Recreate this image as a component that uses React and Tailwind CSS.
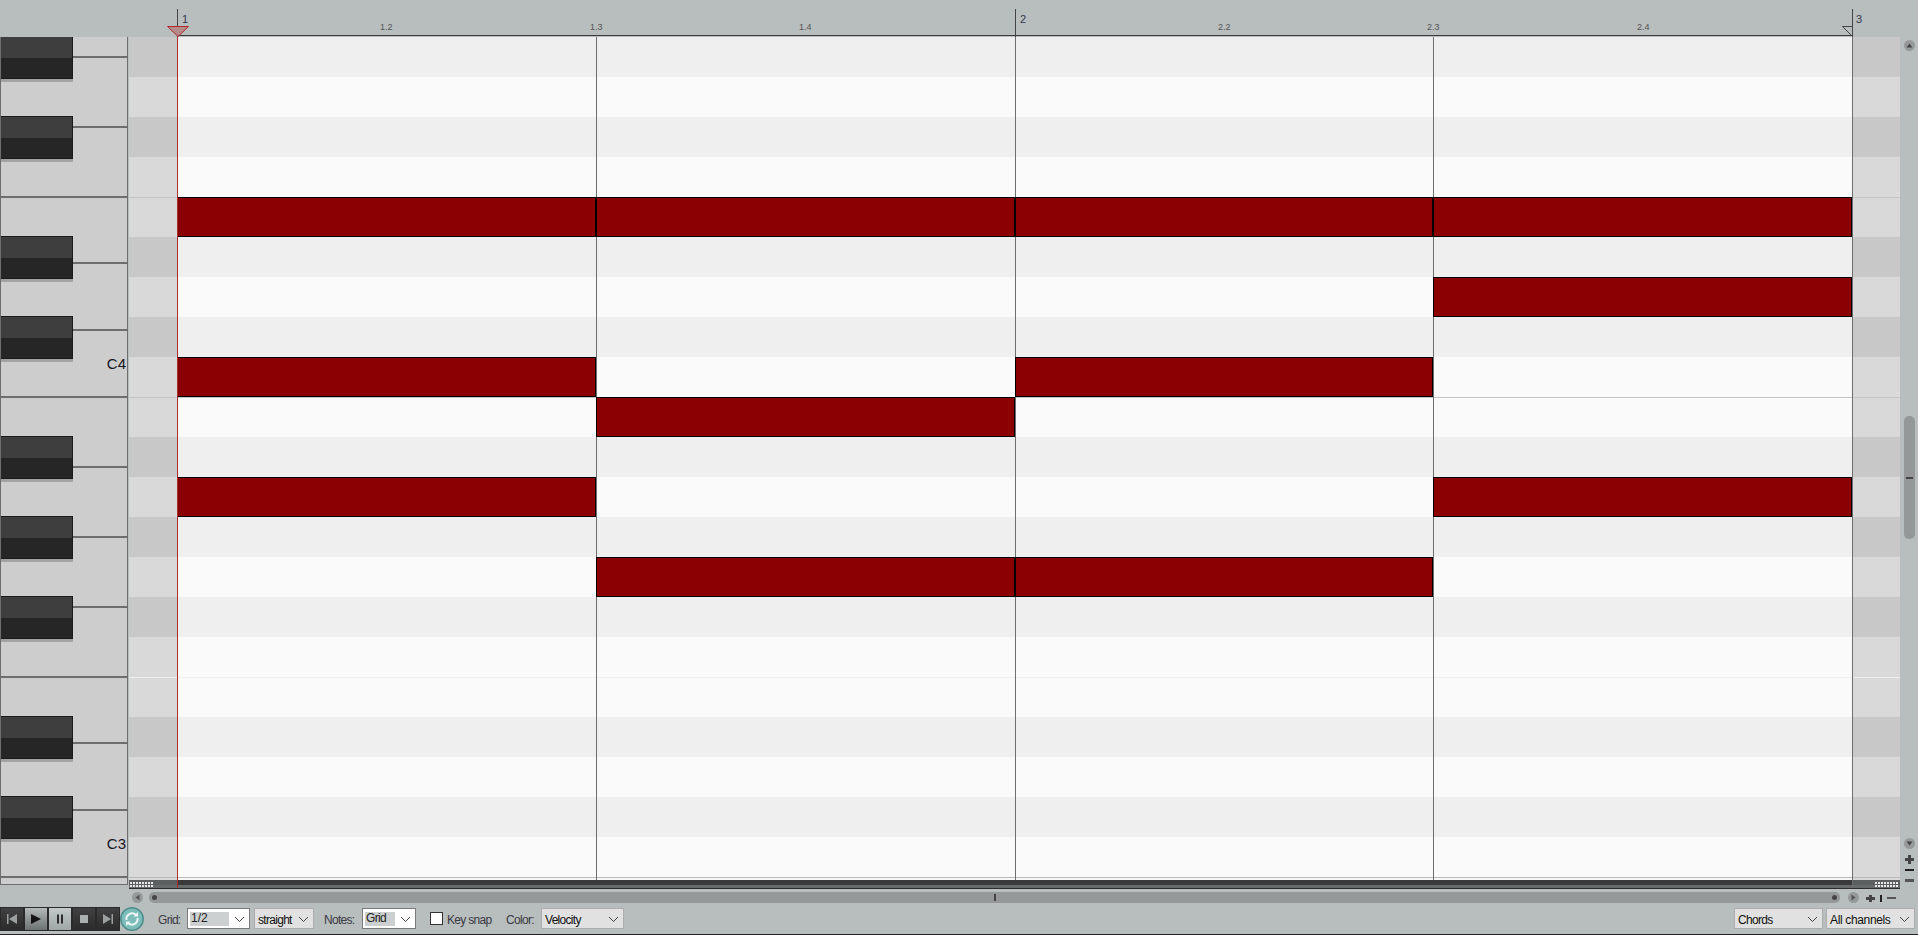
import React from 'react';

const ROWS = [
  'd', 'w', 'd', 'w', 'w', 'd', 'w', 'd', 'w', 'w', 'd',
  'w', 'd', 'w', 'd', 'w', 'w', 'd', 'w', 'd', 'w',
];

const NOTES = [
  'col-start-1 row-start-5',
  'col-start-2 row-start-5',
  'col-start-3 row-start-5',
  'col-start-4 row-start-5',
  'col-start-4 row-start-7',
  'col-start-1 row-start-9',
  'col-start-3 row-start-9',
  'col-start-2 row-start-10',
  'col-start-1 row-start-12',
  'col-start-4 row-start-12',
  'col-start-2 row-start-14',
  'col-start-3 row-start-14',
];

const WHITE_KEYS = [
  { h: 'h-[21px]' },
  { h: 'h-[70px]' },
  { h: 'h-[70px]' },
  { h: 'h-[66px]' },
  { h: 'h-[67px]' },
  { h: 'h-[67px]', label: 'C4' },
  { h: 'h-[70px]' },
  { h: 'h-[70px]' },
  { h: 'h-[70px]' },
  { h: 'h-[70px]' },
  { h: 'h-[66px]' },
  { h: 'h-[67px]' },
  { h: 'h-[67px]', label: 'C3' },
];

const BLACK_KEYS = [
  'top-[-1px]', 'top-[79px]', 'top-[199px]', 'top-[279px]', 'top-[399px]',
  'top-[479px]', 'top-[559px]', 'top-[679px]', 'top-[759px]',
];

const BEATS = [
  { label: '1.2', pos: 'left-[380px]' },
  { label: '1.3', pos: 'left-[590px]' },
  { label: '1.4', pos: 'left-[799px]' },
  { label: '2.2', pos: 'left-[1218px]' },
  { label: '2.3', pos: 'left-[1427px]' },
  { label: '2.4', pos: 'left-[1637px]' },
];

const BARS = [
  { label: '1', tick: 'left-[177px]', pos: 'left-[182px]' },
  { label: '2', tick: 'left-[1015px]', pos: 'left-[1020px]' },
  { label: '3', tick: 'left-[1852px]', pos: 'left-[1856px]' },
];

function Chevron() {
  return (
    <svg width="11" height="6" viewBox="0 0 11 6" className="shrink-0">
      <path d="M1 1l4.5 4.5L10 1" fill="none" stroke="#444" strokeWidth="1" />
    </svg>
  );
}

function Combo({ className, text, active }) {
  return (
    <div
      className={`h-[21px] flex items-center shrink-0 border ${
        active ? 'bg-white border-[#7a7a7a]' : 'bg-[#e1e1e1] border-[#adadad]'
      } ${className}`}
    >
      {active ? (
        <span className="ml-[2px] h-[14px] flex-1 bg-[#ccd0d0] pl-[1px] leading-[12px] text-[#222]">{text}</span>
      ) : (
        <span className="ml-[3px] pt-[2px] flex-1 whitespace-nowrap text-[#111]">{text}</span>
      )}
      <span className="w-[20px] flex justify-center">
        <Chevron />
      </span>
    </div>
  );
}

function RoundButton({ dir }) {
  return (
    <div className="w-[11px] h-[11px] rounded-full bg-[#959999] shrink-0 flex items-center justify-center">
      <svg width="7" height="7" viewBox="0 0 7 7">
        {dir === 'up' && <path d="M3.5 1.5L6.5 5.5H.5z" fill="#444" />}
        {dir === 'down' && <path d="M3.5 5.5L6.5 1.5H.5z" fill="#444" />}
        {dir === 'left' && <path d="M1.5 3.5L5.5 .5V6.5z" fill="#555" />}
        {dir === 'right' && <path d="M5.5 3.5L1.5 .5V6.5z" fill="#555" />}
      </svg>
    </div>
  );
}

function Grip() {
  return (
    <div className="grid grid-cols-[repeat(8,2px)] grid-rows-[repeat(2,2px)] gap-px">
      {Array.from({ length: 16 }).map((_, i) => (
        <span key={i} className="bg-[#e8e8e8]" />
      ))}
    </div>
  );
}

function TransportButton({ className, children }) {
  return (
    <div className={`w-[22px] h-[22px] flex items-center justify-center ${className}`}>
      <svg width="14" height="14" viewBox="0 0 14 14">
        {children}
      </svg>
    </div>
  );
}

const DARK_BTN = 'bg-gradient-to-b from-[#414141] to-[#2b2b2b]';

function Transport() {
  return (
    <div className="w-[120px] h-[24px] bg-[#2a2a2a] flex items-center gap-[2px] pl-[1px] shrink-0">
      <TransportButton className={DARK_BTN}>
        <path d="M2 2h1.500v10H2zM12 2v10L4 7z" fill="#9aa0a0" />
      </TransportButton>
      <TransportButton className="bg-gradient-to-b from-[#b4b9b9] to-[#6c7171]">
        <path d="M2 2l10 5-10 5z" fill="#141414" />
      </TransportButton>
      <TransportButton className="bg-gradient-to-b from-[#c4c9c9] to-[#a0a5a5]">
        <path d="M4 2.500h2v9H4zM8 2.500h2v9H8z" fill="#2c2c2c" />
      </TransportButton>
      <TransportButton className={DARK_BTN}>
        <path d="M3 3h8v8H3z" fill="#aab0b0" />
      </TransportButton>
      <TransportButton className={DARK_BTN}>
        <path d="M2 2v10l8-5zM10.500 2H12v10h-1.500z" fill="#9aa0a0" />
      </TransportButton>
    </div>
  );
}

function LoopButton() {
  return (
    <svg width="24" height="24" viewBox="0 0 24 24" className="shrink-0">
      <circle cx="12" cy="12" r="11.200" fill="#7dbdb9" stroke="#4f8d8c" strokeWidth="1.500" />
      <path d="M6.500 13a5.600 5.600 0 0 1 9.400-5" fill="none" stroke="#eef7f6" strokeWidth="2" />
      <path d="M17.500 11a5.600 5.600 0 0 1-9.400 5" fill="none" stroke="#eef7f6" strokeWidth="2" />
      <path d="M13.500 9.500h4.500V5z" fill="#eef7f6" />
      <path d="M10.500 14.500H6V19z" fill="#eef7f6" />
    </svg>
  );
}

function Header() {
  return (
    <div className="relative h-[37px] shrink-0">
      <div className="absolute left-[177px] top-[35px] w-[1675px] h-px bg-[#3c3c3c]" />
      {BARS.map((b) => (
        <React.Fragment key={b.label}>
          <div className={`absolute top-[9px] h-[28px] w-px bg-[#444] ${b.tick}`} />
          <span className={`absolute top-[13px] text-[11px] leading-[13px] text-[#33384a] ${b.pos}`}>{b.label}</span>
        </React.Fragment>
      ))}
      {BEATS.map((b) => (
        <span key={b.label} className={`absolute top-[22px] text-[9px] leading-[11px] text-[#555] ${b.pos}`}>
          {b.label}
        </span>
      ))}
      <svg width="22" height="11" viewBox="0 0 22 11" className="absolute left-[167px] top-[26px]">
        <path d="M.5.500h21L11 10.500z" fill="#b58b8b" stroke="#b02a2a" strokeWidth="1" />
      </svg>
      <svg width="11" height="11" viewBox="0 0 11 11" className="absolute left-[1842px] top-[26px]">
        <path d="M10.500.500H.5l10 10z" fill="#b8bdbd" stroke="#444" strokeWidth="1" />
      </svg>
    </div>
  );
}

function Piano() {
  return (
    <div className="relative w-[128px] h-[848px] overflow-hidden shrink-0 flex flex-col bg-[#cdcdcd] border-x border-[#6e6e6e]">
      {WHITE_KEYS.map((k, i) => (
        <div key={i} className={`${k.h} shrink-0 border-b-2 border-[#6e6e6e] flex justify-end items-end pr-[1px]`}>
          {k.label && <span className="mb-[24px] text-[15px] leading-[17px] text-[#14141e]">{k.label}</span>}
        </div>
      ))}
      <div className="h-[7px] shrink-0 border-b border-[#6e6e6e]" />
      {BLACK_KEYS.map((top) => (
        <div
          key={top}
          className={`absolute -left-px w-[73px] h-[43px] border border-[#1a1a1a] flex flex-col shadow-[0_3px_0_#a3a3a3] ${top}`}
        >
          <div className="h-[21px] bg-[#3e3e3e]" />
          <div className="flex-1 bg-[#262626]" />
        </div>
      ))}
    </div>
  );
}

function NoteGrid() {
  return (
    <div className="relative w-[1771px] h-[852px] ml-px shrink-0">
      {ROWS.map((r, i) => (
        <div key={i} className="relative h-[40px] flex">
          <div className={`w-[48px] ${r === 'd' ? 'bg-[#c8c8c8]' : 'bg-[#d9d9d9]'}`} />
          <div className={`flex-1 ${r === 'd' ? 'bg-[#efefef]' : 'bg-[#fafafa]'}`} />
          <div className={`w-[48px] ${r === 'd' ? 'bg-[#c8c8c8]' : 'bg-[#d9d9d9]'}`} />
          {(i === 4 || i === 9) && <div className="absolute inset-x-0 top-0 h-px bg-[#c4c4c4]" />}
          {i === 16 && <div className="absolute inset-x-0 top-0 h-px bg-[#efefef]" />}
        </div>
      ))}
      <div className="h-[3px] flex border-t border-[#b9b9b9]">
        <div className="w-[48px] bg-[#d9d9d9]" />
        <div className="flex-1 bg-[#f6f6f6]" />
        <div className="w-[48px] bg-[#d9d9d9]" />
      </div>
      <div className="h-[5px] flex bg-[#3a3a3a]">
        <div className="w-[48px] bg-[#5b5f5f] pl-px pt-[2px]">
          <Grip />
        </div>
        <div className="flex-1" />
        <div className="w-[48px] bg-[#5b5f5f] pl-[23px] pt-[2px]">
          <Grip />
        </div>
      </div>
      <div className="h-[3px] bg-[#666a6a]" />
      <div className="h-px bg-[#2e2e2e]" />

      <div className="absolute left-[467px] top-0 w-px h-[843px] bg-[#6e6e6e]" />
      <div className="absolute left-[886px] top-0 w-px h-[843px] bg-[#6e6e6e]" />
      <div className="absolute left-[1304px] top-0 w-px h-[843px] bg-[#6e6e6e]" />
      <div className="absolute left-[1723px] top-0 w-px h-[851px] bg-[#6e6e6e]" />

      {/* notes sit over the rows */}
      <div className="absolute left-[48px] top-0 w-[1675px] h-[840px] grid grid-cols-[419px_419px_418px_419px] grid-rows-[repeat(21,40px)]">
        {NOTES.map((n) => (
          <div key={n} className={`bg-[#8b0000] border border-black ${n}`} />
        ))}
      </div>
      <div className="absolute left-[48px] top-0 w-px h-[851px] bg-[#a8302f]" />
    </div>
  );
}

function VScroll() {
  return (
    <div className="w-[18px] h-[852px] shrink-0 flex flex-col items-center">
      <div className="mt-[3px]">
        <RoundButton dir="up" />
      </div>
      <div className="mt-[365px] w-[11px] h-[123px] rounded-[5px] bg-[#949898] flex items-center justify-center shrink-0">
        <div className="w-[7px] h-[2px] bg-[#444]" />
      </div>
      <div className="mt-[299px]">
        <RoundButton dir="down" />
      </div>
      <svg width="9" height="9" viewBox="0 0 9 9" className="mt-[6px] shrink-0">
        <path d="M3 0h3v3h3v3H6v3H3V6H0V3h3z" fill="#444" />
      </svg>
      <div className="mt-[5px] w-[9px] h-[2px] bg-[#222] shrink-0" />
      <div className="mt-[8px] w-[9px] h-[3px] bg-[#555] shrink-0" />
    </div>
  );
}

function HScroll() {
  return (
    <div className="h-[14px] pt-[3px] flex items-start shrink-0">
      <div className="ml-[132px]">
        <RoundButton dir="left" />
      </div>
      <div className="ml-[6px] w-[1691px] h-[11px] rounded-[5px] bg-[#949898] flex items-center justify-between px-[3px] shrink-0">
        <span className="w-[5px] h-[5px] rounded-full bg-[#444]" />
        <span className="w-[2px] h-[7px] bg-[#444]" />
        <span className="w-[5px] h-[5px] rounded-full bg-[#444]" />
      </div>
      <div className="ml-[8px]">
        <RoundButton dir="right" />
      </div>
      <svg width="9" height="7" viewBox="0 0 9 7" className="ml-[7px] mt-[3px] shrink-0">
        <path d="M3 0h3v2h3v3H6v2H3V5H0V2h3z" fill="#444" />
      </svg>
      <div className="ml-[5px] mt-[3px] w-[2px] h-[7px] bg-[#222]" />
      <div className="ml-[5px] mt-[5px] w-[9px] h-[2px] bg-[#555]" />
    </div>
  );
}

function Toolbar() {
  return (
    <div className="h-[32px] flex items-center border-b border-[#222] pr-[3px] text-[12px] tracking-[-0.7px] shrink-0">
      <Transport />
      <LoopButton />
      <span className="ml-[14px] pt-[2px] w-[22px] text-[#3a3a44] whitespace-nowrap">Grid:</span>
      <Combo className="ml-[7px] w-[63px] tracking-normal" text="1/2" active />
      <Combo className="ml-[4px] w-[60px]" text="straight" />
      <span className="ml-[10px] pt-[2px] w-[31px] text-[#3a3a44] whitespace-nowrap">Notes:</span>
      <Combo className="ml-[7px] w-[54px]" text="Grid" active />
      <div className="ml-[14px] w-[13px] h-[13px] bg-white border border-[#333] shrink-0" />
      <span className="ml-[4px] pt-[2px] w-[43px] text-[#3a3a44] whitespace-nowrap">Key snap</span>
      <span className="ml-[16px] pt-[2px] w-[26px] text-[#3a3a44] whitespace-nowrap">Color:</span>
      <Combo className="ml-[9px] w-[83px]" text="Velocity" />
      <Combo className="ml-auto w-[89px]" text="Chords" />
      <Combo className="ml-[3px] w-[89px] tracking-[-0.35px]" text="All channels" />
    </div>
  );
}

export default function App() {
  return (
    <div className="relative w-[1918px] h-[935px] overflow-hidden bg-[#b8bdbd] flex flex-col font-['Liberation_Sans',Arial,sans-serif]">
      <Header />
      <div className="h-[852px] flex shrink-0 items-start">
        <Piano />
        <NoteGrid />
        <VScroll />
      </div>
      <HScroll />
      <Toolbar />
    </div>
  );
}
